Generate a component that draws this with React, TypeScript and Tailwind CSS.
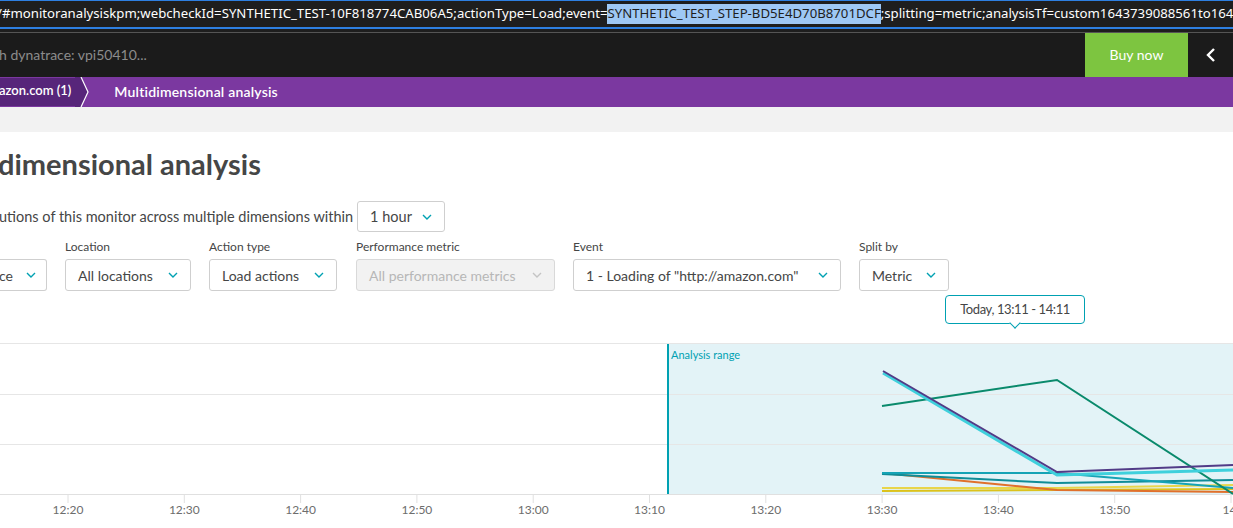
import React from "react";

const Chevron = ({ color = "#00a1b2" }: { color?: string }) => (
  <svg width="10" height="6" viewBox="0 0 10 6" className="shrink-0">
    <path d="M1 1l4 4 4-4" fill="none" stroke={color} strokeWidth="1.4" />
  </svg>
);

function Select({
  label,
  value,
  className = "",
  disabled = false,
}: {
  label: string;
  value: string;
  className?: string;
  disabled?: boolean;
}) {
  return (
    <div className="flex flex-col">
      <span className="h-[20px] text-[12px] leading-[16px] text-[#454646]">{label}</span>
      <div
        className={`flex h-[32px] items-center justify-between rounded-[3px] border px-[12px] text-[14px] ${
          disabled ? "border-[#d9d9d9] bg-[#f2f2f2] text-[#b7b7b7]" : "border-[#cfcfcf] bg-white text-[#454646]"
        } ${className}`}
      >
        <span className="whitespace-nowrap">{value}</span>
        <Chevron color={disabled ? "#c4c4c4" : "#00a1b2"} />
      </div>
    </div>
  );
}

const ticks = ["12:20", "12:30", "12:40", "12:50", "13:00", "13:10", "13:20", "13:30", "13:40", "13:50", "14:"];

function Chart() {
  const x0 = 68;
  const step = 116.3;
  return (
    <svg width="1233" height="190" viewBox="0 343 1233 190" className="block">
      <rect x="667" y="343" width="566" height="151" fill="#e3f3f7" />
      {[343.5, 394.5, 444.5].map((y) => (
        <line key={y} x1="0" x2="1233" y1={y} y2={y} stroke="#e6e6e6" />
      ))}
      <line x1="0" x2="1233" y1="494.5" y2="494.5" stroke="#e0e0e0" />
      <line x1="668" x2="668" y1="344" y2="494" stroke="#00a1b2" strokeWidth="2" />
      <text x="671" y="359" fontSize="11" fill="#00a1b2" fontFamily="Lato, sans-serif">
        Analysis range
      </text>
      {ticks.map((t, i) => {
        const x = x0 + i * step;
        return (
          <g key={t}>
            <line x1={x} x2={x} y1="495" y2="503" stroke="#e0e0e0" />
            <text x={x} y="514" fontSize="12" fill="#6d6d6d" textAnchor="middle" fontFamily="Lato, sans-serif">
              {t}
            </text>
          </g>
        );
      })}
      <g fill="none" strokeWidth="2">
        <polyline points="882,488 1057,488 1233,485" stroke="#e8d54a" />
        <polyline points="882,491 1057,490 1233,489" stroke="#dcc21c" />
        <polyline points="882,473 1057,490 1233,492" stroke="#e0702c" />
        <polyline points="882,474 1057,483 1233,480" stroke="#108c97" />
        <polyline points="882,473 1057,473 1233,488" stroke="#15a3b5" />
        <polyline points="882,406 1057,380 1233,494" stroke="#0a8a6c" />
        <polyline points="883,373 1057,475 1233,470" stroke="#3fd0dc" strokeWidth="3" />
        <polyline points="883,371 1057,472 1233,465" stroke="#513b87" />
      </g>
    </svg>
  );
}

export default function App() {
  return (
    <div className="h-[528px] w-[1233px] overflow-hidden bg-white font-['Lato',sans-serif]">
      {/* browser url bar */}
      <div className="h-[33px] border-b border-[#555] bg-[#1e1e1e]">
        <div className="flex h-[29px] items-center overflow-hidden whitespace-nowrap border-t border-b-2 border-[#2e7fe0] font-['Noto_Sans',sans-serif] text-[13.2px] text-white">
          <span className="-ml-[3px]">/#monitoranalysiskpm;webcheckId=SYNTHETIC_TEST-10F818774CAB06A5;actionType=Load;event=</span>
          <span className="bg-[#9ec8f5] text-[#1e1e1e]">SYNTHETIC_TEST_STEP-BD5E4D70B8701DCF</span>
          <span>;splitting=metric;analysisTf=custom1643739088561to164</span>
        </div>
      </div>

      {/* header */}
      <div className="flex h-[44px] items-center bg-[#1b1b1b]">
        <span className="-ml-[1px] flex-1 pb-[2px] text-[14px] text-[#8c8c8c]">h dynatrace: vpi50410...</span>
        <button className="h-full w-[103px] pb-[2px] text-[14px] text-white bg-[#7dc540]">Buy now</button>
        <div className="flex h-full w-[45px] items-center justify-center">
          <svg width="12" height="16" viewBox="0 0 12 16">
            <path d="M9 2L3 8l6 6" fill="none" stroke="#fff" strokeWidth="2.4" />
          </svg>
        </div>
      </div>

      {/* breadcrumb */}
      <div className="flex h-[30px] items-center bg-[#7b38a0] pb-[2px] text-[14px] font-semibold text-white">
        <div className="-mb-[2px] flex h-full items-center bg-[#57257a] pb-[2px] pr-[4px]">
          <span className="-ml-[1px] text-[13px]">azon.com (1)</span>
        </div>
        <svg width="14" height="30" viewBox="0 0 14 30" className="-mb-[2px] shrink-0">
          <path d="M0 0h6l7 15-7 15H0z" fill="#57257a" />
          <path d="M6 0l7 15-7 15" fill="none" stroke="#fff" strokeWidth="1.2" />
        </svg>
        <span className="ml-[25px] tracking-[0.2px]">Multidimensional analysis</span>
      </div>

      <div className="h-[25px] bg-[#f2f2f2]" />

      {/* content */}
      <div className="pt-[12px]">
        <h1 className="-ml-[2px] h-[40px] text-[29px] font-bold leading-[40px] text-[#454646]">dimensional analysis</h1>
        <div className="mt-[17px] flex items-center gap-[4px] text-[14.5px] text-[#454646]">
          <span className="-ml-[1px]">utions of this monitor across multiple dimensions within</span>
          <div className="flex h-[31px] w-[88px] items-center justify-between rounded-[3px] border border-[#cfcfcf] px-[12px]">
            <span>1 hour</span>
            <Chevron />
          </div>
        </div>

        <div className="mt-[7px] flex gap-[18px]">
          <div className="flex flex-col">
            <span className="h-[20px]" />
            <div className="-ml-[1px] flex h-[32px] w-[48px] items-center gap-[13px] rounded-r-[3px] border border-l-0 border-[#cfcfcf] text-[14px] text-[#454646]">
              <span>ce</span>
              <Chevron />
            </div>
          </div>
          <Select label="Location" value="All locations" className="w-[126px]" />
          <Select label="Action type" value="Load actions" className="w-[128px]" />
          <div className="ml-[1px]">
            <Select label="Performance metric" value="All performance metrics" className="w-[199px]" disabled />
          </div>
          <Select label="Event" value={'1 - Loading of "http://amazon.com"'} className="w-[268px]" />
          <Select label="Split by" value="Metric" className="w-[90px]" />
        </div>

        <div className="flex h-[52px] justify-end pr-[148px] pt-[4px]">
          <div className="relative h-[29px] rounded-[4px] border border-[#00a1b2] bg-white px-[14px] text-[13px] leading-[27px] tracking-[-0.4px] text-[#454646]">
            Today, 13:11 - 14:11
            <span className="absolute left-1/2 top-full h-[8px] w-[8px] -translate-x-1/2 -translate-y-[4px] rotate-45 border-b border-r border-[#00a1b2] bg-white" />
          </div>
        </div>

        <Chart />
      </div>
    </div>
  );
}
